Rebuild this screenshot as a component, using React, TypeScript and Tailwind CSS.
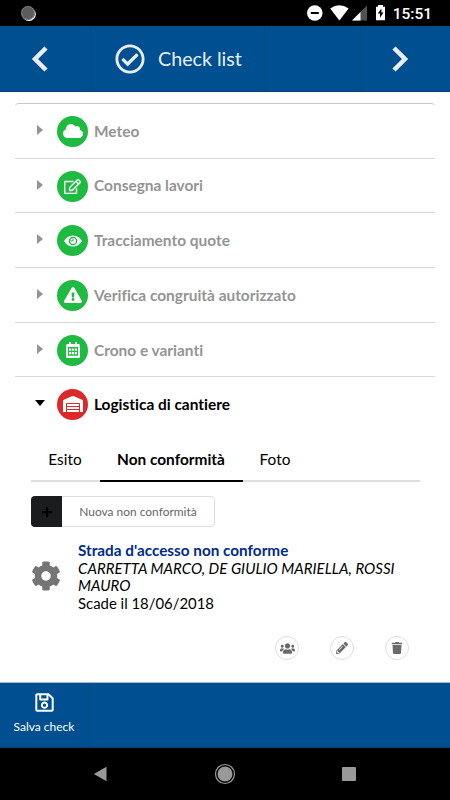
import React from 'react'
import {
  FaCloud,
  FaCog,
  FaExclamationTriangle,
  FaPencilAlt,
  FaPlus,
  FaRegCheckCircle,
  FaRegEdit,
  FaRegSave,
  FaTrash,
  FaUsers,
  FaWarehouse,
} from 'react-icons/fa'

const EyeIcon = () => (
  <svg width="18" height="12" viewBox="0 0 18 12">
    <path d="M0 6C2 2.500 5 .4 9 .4S16 2.500 18 6c-2 3.500-5 5.600-9 5.600S2 9.500 0 6z" fill="currentColor" />
    <circle cx="9" cy="6" r="3.600" fill="none" stroke="#1fba41" strokeWidth="1.300" />
    <path d="M9 3.400v2.400H6.400" fill="none" stroke="#1fba41" strokeWidth="1" />
  </svg>
)

const CalendarIcon = () => (
  <svg width="14" height="16" viewBox="0 0 14 16">
    <path
      fillRule="evenodd"
      fill="currentColor"
      d="M3 0h1.800v2h4.400V0H11v2h1.500A1.500 1.500 0 0 1 14 3.500v11a1.500 1.500 0 0 1-1.500 1.500h-11A1.500 1.500 0 0 1 0 14.500v-11A1.500 1.500 0 0 1 1.500 2H3zM2 5v8.800h10V5z"
    />
    <path
      fill="currentColor"
      d="M3 6.500h2.200v2.200H3zM5.900 6.500h2.200v2.200H5.900zM8.800 6.500H11v2.200H8.800zM3 10h2.200v2.200H3zM5.900 10h2.200v2.200H5.900zM8.800 10H11v2.200H8.800z"
    />
  </svg>
)

const sections = [
  { label: 'Meteo', icon: <FaCloud size={20} /> },
  { label: 'Consegna lavori', icon: <FaRegEdit size={17} /> },
  { label: 'Tracciamento quote', icon: <EyeIcon /> },
  { label: 'Verifica congruità autorizzato', icon: <FaExclamationTriangle size={18} /> },
  { label: 'Crono e varianti', icon: <CalendarIcon /> },
]

const StatusBar = () => (
  <div className="flex h-[26px] items-center bg-black pl-5 pr-[18px] text-white">
    <svg width="17" height="17" viewBox="0 0 17 17">
      <circle cx="9" cy="9.2" r="6.8" fill="#fff" />
      <circle cx="8" cy="8" r="7" fill="#5c5c5c" />
      <circle cx="8" cy="8" r="6.400" fill="none" stroke="#8a8a8a" strokeWidth="1.200" strokeDasharray="1 1" />
    </svg>
    <svg className="ml-auto" width="78" height="18" viewBox="0 0 78 18">
      <circle cx="7.8" cy="9" r="7.8" fill="#fff" />
      <path d="M3.8 8h8v2h-8z" fill="#000" />
      <path d="M23.2 4.4Q32.400-2 41.600 4.400L32.400 16.600z" fill="#fff" />
      <path d="M60 1.500v15H45z" fill="#505050" />
      <path d="M53.500 8v8.500H45z" fill="#fff" />
      <path d="M69 2.800h2V1h5v1.800h2v13.400h-9z" fill="#fff" />
      <path d="M74.400 4.600l-3.600 5h2.200v4.200l3.500-5.200h-2.100z" fill="#000" />
    </svg>
    <span className="ml-[8px] pt-[3px] font-['Roboto',sans-serif] text-[15.500px] leading-none font-medium">15:51</span>
  </div>
)

const Header = () => (
  <header className="flex h-[66px] border-b border-[#003f7d] bg-[#004f90] text-[#e8effb]">
    <button type="button" aria-label="Indietro" className="flex w-[91px] items-center justify-center border-r border-[#07477f] pr-[10px]">
      <svg width="18" height="28" viewBox="0 0 18 28">
        <path d="M15 3L4 14l11 11" fill="none" stroke="currentColor" strokeWidth="4.500" />
      </svg>
    </button>
    <div className="flex w-[174px] items-center border-r border-[#07477f] pl-6">
      <FaRegCheckCircle size={30} />
      <span className="ml-[13px] pt-px text-[19.700px]">Check list</span>
    </div>
    <div className="w-[96px] border-r border-[#07477f]" />
    <button type="button" aria-label="Avanti" className="flex flex-1 items-center justify-center pr-[11px]">
      <svg width="18" height="28" viewBox="0 0 18 28">
        <path d="M3 3l11 11L3 25" fill="none" stroke="currentColor" strokeWidth="4.500" />
      </svg>
    </button>
  </header>
)

type RoundIconProps = {
  className: string
  children: React.ReactNode
}

const RoundIcon = ({ className, children }: RoundIconProps) => (
  <span className={`flex size-[31px] shrink-0 items-center justify-center rounded-full text-white ${className}`}>
    {children}
  </span>
)

const ActionButton = ({ label, children }: { label: string; children: React.ReactNode }) => (
  <button
    type="button"
    aria-label={label}
    className="flex size-6 items-center justify-center rounded-full border border-[#dededf] text-[#6a6a6b]"
  >
    {children}
  </button>
)

const App = () => (
  <div className="flex h-[800px] w-[450px] flex-col overflow-hidden bg-white font-['Lato',sans-serif] text-black [font-variant-ligatures:none]">
    <StatusBar />
    <Header />

    <main className="h-[590px] px-[15px] pt-[11px]">
      <ul className="rounded-t-sm border-t border-[#c9c9ca]">
        {sections.map((section) => (
          <li
            key={section.label}
            className="flex h-[54.700px] items-center border-b border-[#d8d8d9] pt-px pl-[22px] text-[#949494]"
          >
            <svg width="6" height="10" viewBox="0 0 6 10" className="mb-[3px]">
              <path d="M0 0L6 5L0 10z" fill="currentColor" />
            </svg>
            <RoundIcon className="ml-[14px] bg-[#1fba41]">{section.icon}</RoundIcon>
            <span className="ml-[6px] text-[15.450px] font-bold">{section.label}</span>
          </li>
        ))}
      </ul>

      <div className="flex h-[54px] items-center pl-[20px]">
        <svg width="10" height="6" viewBox="0 0 10 6" className="mb-[3px]">
          <path d="M0 0h10L5 6z" fill="currentColor" />
        </svg>
        <RoundIcon className="ml-3 bg-[#db2828]">
          <FaWarehouse size={20} />
        </RoundIcon>
        <span className="ml-[6px] text-[15.450px] font-bold">Logistica di cantiere</span>
      </div>

      <div className="mx-[15.500px] mt-[6px] flex h-[45px] border-b-2 border-[#dededf] text-[15.400px]">
        <span className="-mb-[2px] w-[69px] pt-[11px] text-center">Esito</span>
        <span className="-mb-[2px] w-[143px] border-b-2 border-black pt-[11px] text-center font-bold">Non conformità</span>
        <span className="-mb-[2px] w-[65px] pt-[11px] text-center">Foto</span>
      </div>

      <button
        type="button"
        className="mt-[14px] ml-4 flex h-[31px] w-[184px] rounded-[4px] border border-[#dededf] text-[11.950px] text-[#666]"
      >
        <span className="-m-px flex h-[31px] w-[31px] items-center justify-center rounded-l-[4px] bg-[#1b1c1d] text-black">
          <FaPlus size={12} />
        </span>
        <span className="flex-1 self-center pl-px text-center">Nuova non conformità</span>
      </button>

      <div className="mt-[15px] flex pl-4">
        <FaCog size={30} className="mt-[19px] text-[#757575]" />
        <div className="ml-[17px] w-[330px] text-[15.050px] leading-[17.500px]">
          <div className="text-[15.300px] font-bold text-[#002b8c]">Strada d&apos;accesso non conforme</div>
          <div className="italic">CARRETTA MARCO, DE GIULIO MARIELLA, ROSSI MAURO</div>
          <div className="text-[14.900px]">Scade il 18/06/2018</div>
        </div>
      </div>

      <div className="mt-[24px] flex justify-end gap-[31px] pr-[26px]">
        <ActionButton label="Utenti">
          <FaUsers size={15} />
        </ActionButton>
        <ActionButton label="Modifica">
          <FaPencilAlt size={12} />
        </ActionButton>
        <ActionButton label="Elimina">
          <FaTrash size={12} />
        </ActionButton>
      </div>
    </main>

    <footer className="flex h-[66px] border-t border-b border-t-[#a3b7cd] border-b-[#003d78] bg-[#004f90] text-white">
      <button type="button" className="flex w-[89px] flex-col items-center border-r border-[#07477f] pt-[9px]">
        <FaRegSave size={21} />
        <span className="mt-[6px] text-[12px] leading-4">Salva check</span>
      </button>
    </footer>

    <nav className="flex flex-1 items-center bg-black pl-[93px] text-[#999]">
      <svg width="14" height="16" viewBox="0 0 14 16">
        <path d="M.8 8L13.500 .8v14.400z" fill="currentColor" />
      </svg>
      <svg width="22" height="22" viewBox="0 0 22 22" className="ml-[107px]">
        <circle cx="11" cy="11" r="9.500" fill="none" stroke="currentColor" strokeWidth="1.200" />
        <circle cx="11" cy="11" r="7.500" fill="currentColor" />
      </svg>
      <span className="ml-[106px] size-[14px] rounded-[1px] bg-[#999]" />
    </nav>
  </div>
)

export default App
